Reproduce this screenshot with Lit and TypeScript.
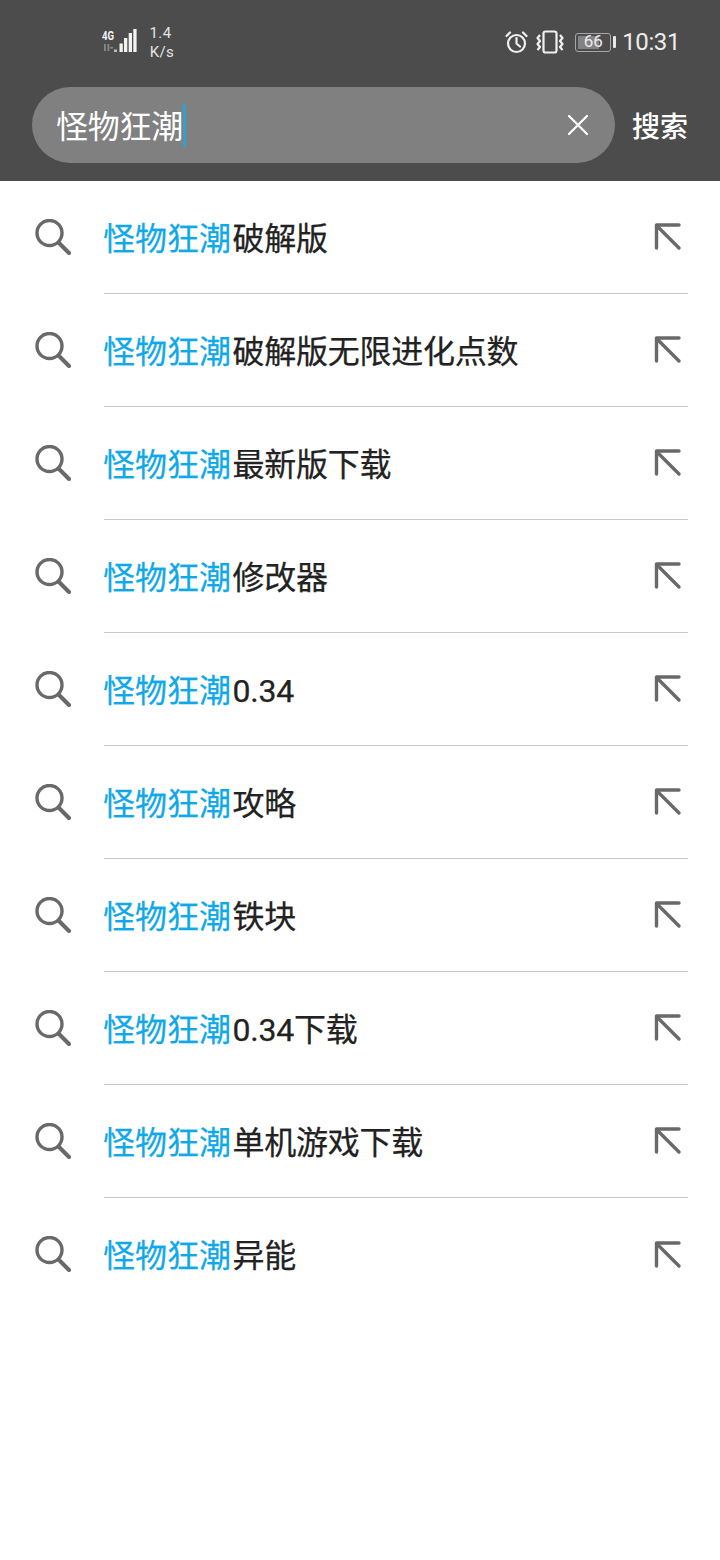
import { LitElement, html, css } from 'lit';
import { customElement } from 'lit/decorators.js';

const KEYWORD = '怪物狂潮';
const SUGGESTIONS = [
  '破解版',
  '破解版无限进化点数',
  '最新版下载',
  '修改器',
  '0.34',
  '攻略',
  '铁块',
  '0.34下载',
  '单机游戏下载',
  '异能',
];

@customElement('app-root')
export class AppRoot extends LitElement {
  static styles = css`
    :host {
      display: block;
      width: 720px;
      height: 1560px;
      background: #fff;
      font-family: "Roboto", "Noto Sans CJK SC", sans-serif;
      overflow: hidden;
    }

    .header {
      height: 181px;
      box-sizing: border-box;
      background: #4c4c4c;
      color: #fff;
    }

    .status {
      height: 87px;
      box-sizing: border-box;
      padding: 22px 40px 0 101px;
      display: flex;
      align-items: flex-start;
    }

    .signal {
      width: 37px;
      height: 30px;
      margin-top: 6px;
    }

    .speed {
      margin-left: 4px;
      margin-top: 2px;
      width: 40px;
      font-size: 15px;
      line-height: 19px;
      color: #e4e4e4;
      text-align: center;
      letter-spacing: 0.4px;
    }

    .speed div:first-child {
      padding-right: 3px;
    }

    .status-right {
      margin-left: auto;
      display: flex;
      align-items: center;
      height: 40px;
    }

    .alarm {
      width: 23px;
      height: 23px;
    }

    .vibrate {
      width: 28px;
      height: 24px;
      margin-left: 8px;
    }

    .battery {
      margin-left: 11px;
      width: 36px;
      height: 19px;
      box-sizing: border-box;
      border: 1.5px solid #a6a6a6;
      border-radius: 3px;
      background: linear-gradient(90deg, #828282 0 66%, transparent 66%);
      background-clip: content-box;
      padding: 1.5px;
      color: #ececec;
      font-size: 17px;
      line-height: 13px;
      text-align: center;
    }

    .battery-tip {
      width: 3px;
      height: 12px;
      margin-left: 2px;
      background: #e8e8e8;
      border-radius: 1px;
    }

    .clock {
      margin-left: 6px;
      font-size: 24px;
      color: #ececec;
      letter-spacing: -0.4px;
    }

    .search-row {
      display: flex;
      align-items: center;
      padding: 0 32px;
    }

    .pill {
      flex: none;
      width: 583px;
      height: 76px;
      box-sizing: border-box;
      border-radius: 38px;
      background: #808080;
      padding: 0 25px 0 24px;
      display: flex;
      align-items: center;
    }

    .query {
      font-size: 32px;
      letter-spacing: -0.25px;
      color: #fff;
      padding-bottom: 3px;
    }

    .caret {
      flex: none;
      width: 3px;
      height: 43px;
      background: #2f9fd6;
    }

    .clear {
      margin-left: auto;
      width: 22px;
      height: 22px;
      margin-right: 1px;
    }

    .action {
      margin-left: 17px;
      font-size: 28px;
      font-weight: 500;
      white-space: nowrap;
    }

    .row {
      height: 113px;
      display: flex;
      align-items: stretch;
    }

    .lens {
      width: 36px;
      height: 36px;
      margin: 38px 0 0 35px;
    }

    .body {
      margin-left: 33px;
      margin-right: 32px;
      flex: 1;
      display: flex;
      align-items: center;
      justify-content: space-between;
      border-bottom: 1px solid #c8c8c8;
    }

    .row:last-child .body {
      border-bottom: none;
    }

    .label {
      font-size: 32px;
      letter-spacing: -0.25px;
      color: #222;
      white-space: nowrap;
      padding-bottom: 3px;
      margin-left: -1px;
      -webkit-text-stroke: 0.25px currentColor;
    }

    .label b {
      font-weight: 400;
      letter-spacing: 0;
      margin-right: 1.5px;
      color: #0fa8ea;
    }

    .arrow {
      width: 30px;
      height: 30px;
      margin-right: 5px;
    }
  `;

  renderRow(suffix: string) {
    return html`
      <div class="row">
        <svg class="lens" viewBox="0 0 36 36" fill="none" stroke="#696969" stroke-width="3.4" stroke-linecap="round">
          <circle cx="14.500" cy="14" r="12.500"></circle>
          <path d="M24 24 34 34" stroke-width="4"></path>
        </svg>
        <div class="body">
          <span class="label"><b>${KEYWORD}</b>${suffix}</span>
          <svg class="arrow" viewBox="0 0 30 30" fill="none" stroke="#696969" stroke-width="3.4" stroke-linecap="round" stroke-linejoin="round">
            <path d="M26 3H3.500V26"></path>
            <path d="M4 4 26 26"></path>
          </svg>
        </div>
      </div>
    `;
  }

  render() {
    return html`
      <div class="header">
        <div class="status">
          <svg class="signal" viewBox="0 0 37 30">
            <text x="1" y="12" font-size="13" font-weight="700" fill="#f2f2f2" font-family="Roboto, sans-serif" textLength="12" lengthAdjust="spacingAndGlyphs">4G</text>
            <path d="M3 16h1.800v7H3zM6.500 16h1.800v7H6.500zM9 19h3v1.600H9z" fill="#888"></path>
            <path d="M13 21.500h3V24h-3z" fill="#bbb"></path>
            <path d="M18.500 15.500h3.300V24h-3.300zM23 10h3.300v14H23zM27.700 5H31v19h-3.300zM32.300 1h3.300v23h-3.300z" fill="#f2f2f2"></path>
          </svg>
          <div class="speed"><div>1.4</div><div>K/s</div></div>
          <div class="status-right">
            <svg class="alarm" viewBox="0 0 23 23" fill="none" stroke="#f0f0f0" stroke-width="2.200" stroke-linecap="round">
              <circle cx="11.500" cy="12.500" r="8.500"></circle>
              <path d="M11.500 7v5.500l3.500 3M1.500 5l3.500-3.500M21.500 5 18 1.500"></path>
            </svg>
            <svg class="vibrate" viewBox="0 0 28 24" fill="none" stroke="#f0f0f0" stroke-width="2.200" stroke-linejoin="round">
              <rect x="7.500" y="1.500" width="13" height="21" rx="2"></rect>
              <path d="M4 5 1.500 8 4 11 1.500 14 4 17 1.500 20M24 5l2.500 3L24 11l2.500 3L24 17l2.500 3"></path>
            </svg>
            <div class="battery">66</div>
            <div class="battery-tip"></div>
            <div class="clock">10:31</div>
          </div>
        </div>
        <div class="search-row">
          <div class="pill">
            <span class="query">${KEYWORD}</span>
            <span class="caret"></span>
            <svg class="clear" viewBox="0 0 22 22" stroke="#fff" stroke-width="2.200" stroke-linecap="round">
              <path d="M2 2 20 20M20 2 2 20"></path>
            </svg>
          </div>
          <span class="action">搜索</span>
        </div>
      </div>
      ${SUGGESTIONS.map((s) => this.renderRow(s))}
    `;
  }
}
